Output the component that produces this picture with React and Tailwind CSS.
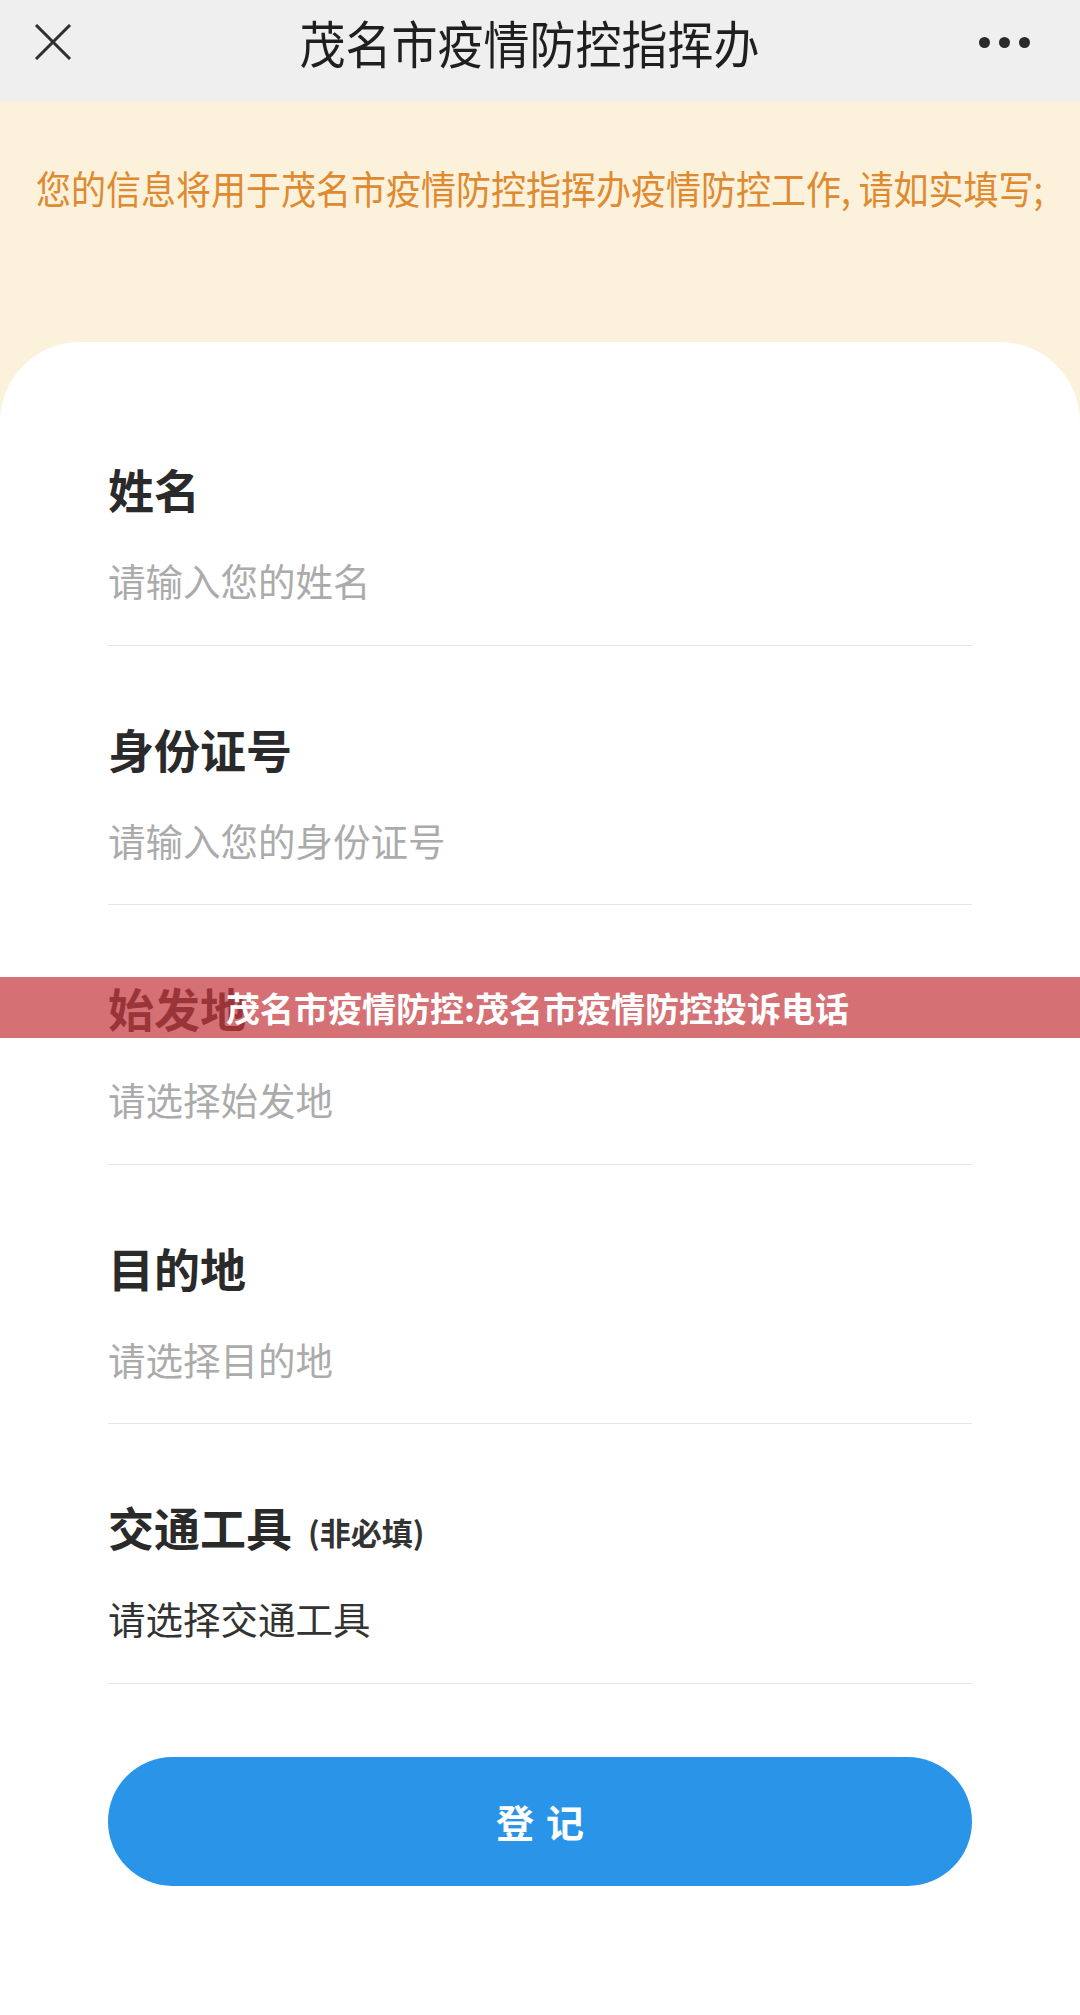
import React from 'react';

const font = { fontFamily: '"Noto Sans CJK SC", "Noto Sans", sans-serif' };

const fields = [
  { label: '姓名', placeholder: '请输入您的姓名' },
  { label: '身份证号', placeholder: '请输入您的身份证号' },
  { label: '始发地', placeholder: '请选择始发地' },
  { label: '目的地', placeholder: '请选择目的地' },
  { label: '交通工具', note: '(非必填)', placeholder: '请选择交通工具', filled: true },
];

function Field({ label, note, placeholder, filled, first }) {
  return (
    <div className={first ? '' : 'mt-[81px]'}>
      <div className="flex items-end h-[44px]">
        <span className="text-[46px] leading-none font-bold text-[#2a2a2a]">{label}</span>
        {note && <span className="ml-[16px] mb-[2px] text-[31px] leading-none font-bold text-[#333]">{note}</span>}
      </div>
      <div className={`mt-[50px] text-[37.5px] leading-none ${filled ? 'text-[#333]' : 'text-[#ababab]'}`}>
        {placeholder}
      </div>
      <div className="mt-[46px] h-px bg-[#e6e6e6]" />
    </div>
  );
}

export default function App() {
  return (
    <div className="relative w-[1080px] min-h-[2015px] bg-white overflow-hidden" style={font}>
      {/* top bar */}
      <div className="h-[102px] bg-[#efefef] flex items-center justify-between px-[34px] pb-[18px]">
        <svg width="38" height="36" viewBox="0 0 38 36">
          <path d="M2 1 L36 35 M36 1 L2 35" stroke="#2f2f2f" strokeWidth="3" fill="none" />
        </svg>
        <div className="text-[46px] leading-none text-[#1f1f1f] scale-y-110 ml-[8px]">茂名市疫情防控指挥办</div>
        <div className="flex gap-[9px] mr-[16px]">
          <span className="w-[11px] h-[11px] rounded-full bg-[#2a2a2a]" />
          <span className="w-[11px] h-[11px] rounded-full bg-[#2a2a2a]" />
          <span className="w-[11px] h-[11px] rounded-full bg-[#2a2a2a]" />
        </div>
      </div>

      {/* notice + card */}
      <div className="bg-[#fcf1da]">
        <div className="h-[240px] pt-[67px] px-[36px]">
          <p className="text-[35px] leading-none text-[#de8a30] whitespace-nowrap scale-y-110 origin-left">
            您的信息将用于茂名市疫情防控指挥办疫情防控工作, 请如实填写;
          </p>
        </div>

        <div className="bg-white rounded-t-[80px] pt-[125px] px-[108px] pb-[130px]">
          {fields.map((f, i) => (
            <Field key={f.label} {...f} first={i === 0} />
          ))}

          <button className="mt-[73px] w-full h-[129px] rounded-full bg-[#2a95e8] text-white text-[38px] font-bold tracking-[12px] leading-none pl-[12px]">
            登记
          </button>
        </div>
      </div>

      {/* overlay banner */}
      <div className="absolute left-0 top-[977px] w-full h-[61px] bg-[rgba(197,57,64,0.72)] flex items-center">
        <span className="ml-[226px] text-[34px] leading-none font-bold text-white">
          茂名市疫情防控:茂名市疫情防控投诉电话
        </span>
      </div>
    </div>
  );
}
